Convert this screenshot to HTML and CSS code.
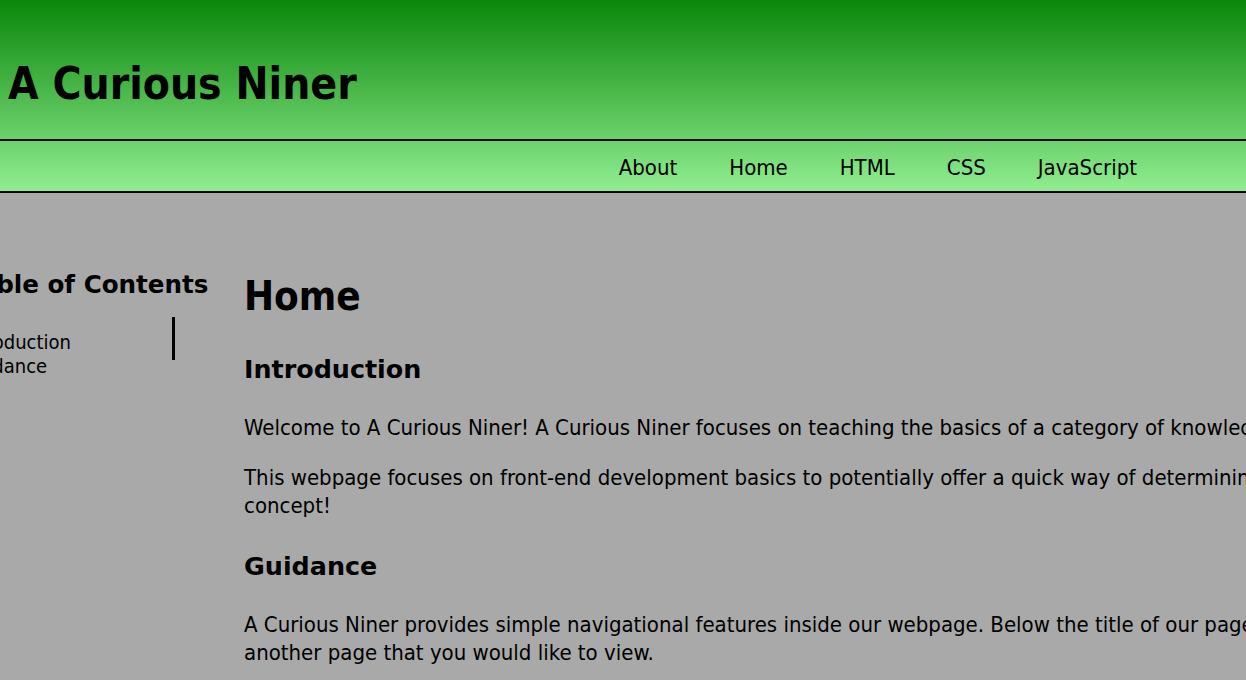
FILE: index.html
```html
<!DOCTYPE html>
<html lang="en">
<head>
<meta charset="utf-8">
<title>A Curious Niner</title>
<link rel="stylesheet" href="styles.css">
</head>
<body>
<header class="site-header">
  <div class="title-bar">
    <h1 class="site-title">A Curious Niner</h1>
  </div>
  <nav class="main-nav">
    <a href="#" class="nav-link">About</a>
    <a href="#" class="nav-link">Home</a>
    <a href="#" class="nav-link">HTML</a>
    <a href="#" class="nav-link">CSS</a>
    <a href="#" class="nav-link">JavaScript</a>
  </nav>
</header>
<div class="page">
  <aside class="toc">
    <h2 class="toc-title">Table of Contents</h2>
    <div class="toc-body">
      <ul class="toc-list">
        <li><a href="#intro" class="toc-link">Introduction</a></li>
        <li><a href="#guidance" class="toc-link">Guidance</a></li>
      </ul>
      <div class="toc-bar"></div>
    </div>
  </aside>
  <main class="content">
    <h1 class="page-title">Home</h1>
    <h2 class="section-title" id="intro">Introduction</h2>
    <p class="para">Welcome to A Curious Niner! A Curious Niner focuses on teaching the basics of a category of knowledge.</p>
    <p class="para">This webpage focuses on front-end development basics to potentially offer a quick way of determining your interest in a new<br>concept!</p>
    <h2 class="section-title" id="guidance">Guidance</h2>
    <p class="para">A Curious Niner provides simple navigational features inside our webpage. Below the title of our page, you can select<br>another page that you would like to view.</p>
    <p class="para">On the left side of each page, a table of contents lets you jump to the section you would like to read.</p>
  </main>
</div>
</body>
</html>
```

FILE: styles.css
```css
html {
  overflow: hidden;
}

body {
  margin: 0;
  background: #a9a9a9;
  color: #000;
  font-family: "DejaVu Sans Condensed", "DejaVu Sans", Tahoma, sans-serif;
  font-stretch: condensed;
}

.site-header {
  background: linear-gradient(#0a870a, #90ee90);
  border-bottom: 2px solid #000;
}

.title-bar {
  height: 141px;
  box-sizing: border-box;
  padding: 58px 0 0 8px;
  border-bottom: 2px solid #000;
}

.site-title {
  margin: 0;
  font-size: 44px;
  line-height: 52px;
  font-weight: bold;
}

.main-nav {
  height: 50px;
  display: flex;
  justify-content: flex-end;
  align-items: center;
  padding-right: 83px;
}

.nav-link {
  color: #000;
  text-decoration: none;
  font-size: 22px;
  padding: 0 26px;
  line-height: 28px;
  margin-top: 4px;
}

.page {
  display: flex;
  align-items: flex-start;
  gap: 34px;
  padding-top: 75px;
}

.toc {
  flex: 0 0 248px;
  margin-left: -38px;
}

.toc-title {
  margin: 3px 0 0 4px;
  font-family: "DejaVu Sans", Verdana, sans-serif;
  font-stretch: normal;
  font-size: 24.6px;
  line-height: 28px;
  font-weight: bold;
  white-space: nowrap;
}

.toc-body {
  display: flex;
  align-items: flex-start;
  margin-top: 18px;
}

.toc-list {
  list-style: none;
  margin: 0;
  padding: 13px 0 0;
  width: 210px;
  font-size: 20px;
  line-height: 24px;
}

.toc-link {
  color: #000;
  text-decoration: none;
}

.toc-bar {
  width: 3px;
  height: 43px;
  background: #000;
}

.content {
  flex: 0 0 1400px;
  padding-top: 5px;
}

.page-title {
  margin: 0 0 35px;
  font-size: 40px;
  line-height: 47px;
  font-weight: bold;
}

.section-title {
  margin: 32px 0 30px;
  font-family: "DejaVu Sans", Verdana, sans-serif;
  font-stretch: normal;
  font-size: 25.4px;
  line-height: 29px;
  font-weight: bold;
}

.page-title + .section-title {
  margin-top: 0;
}

.para {
  margin: 0 0 22px;
  font-size: 22px;
  line-height: 28px;
}
```
